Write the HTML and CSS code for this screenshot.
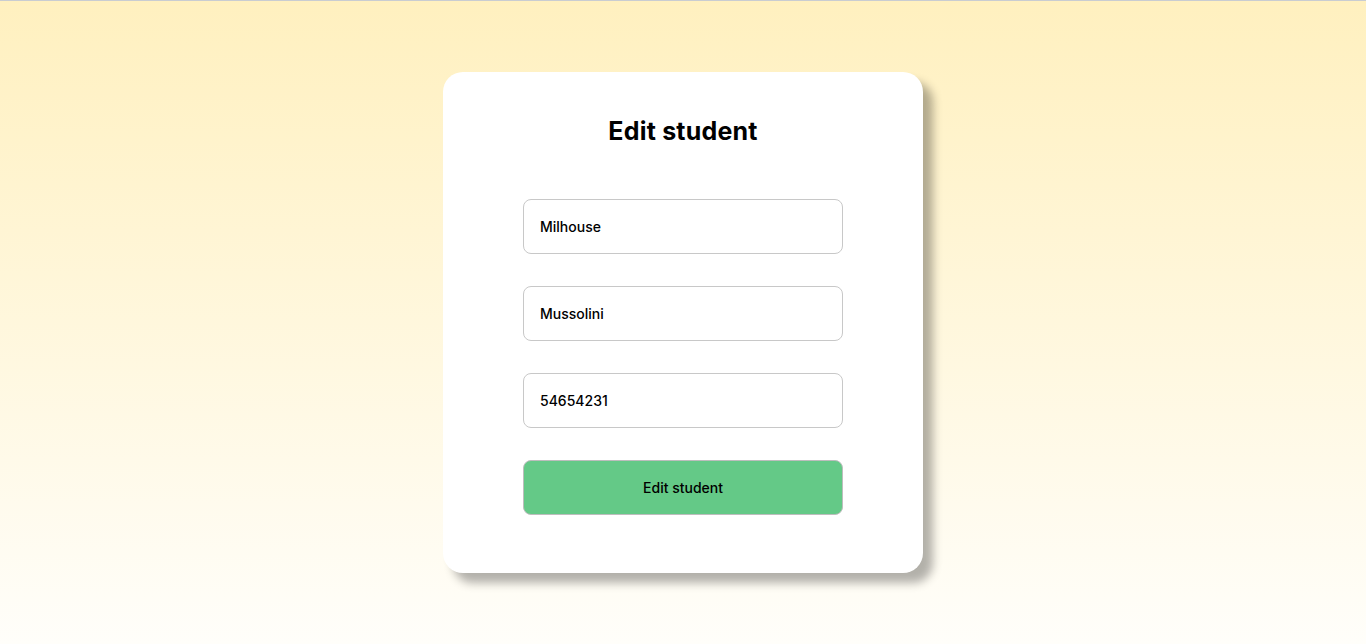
FILE: index.html
```html
<!DOCTYPE html>
<html lang="en">
<head>
<meta charset="utf-8">
<title>Edit student</title>
<link rel="stylesheet" href="styles.css">
</head>
<body>
<main class="page">
  <form class="card">
    <h1 class="title">Edit student</h1>
    <div class="fields">
      <input class="field" type="text" value="Milhouse">
      <input class="field" type="text" value="Mussolini">
      <input class="field" type="text" value="54654231">
      <button class="submit" type="button">Edit student</button>
    </div>
  </form>
</main>
</body>
</html>
```
FILE: styles.css
```css
* { box-sizing: border-box; }
html, body { margin: 0; padding: 0; }
body {
  font-family: "Inter", "Open Sans", sans-serif;
  border-top: 1px solid #c9ccd1;
  min-height: 644px;
  background: linear-gradient(180deg, #fff0bf 0%, #fffefa 100%);
}
.page {
  min-height: 643px;
  display: flex;
  align-items: center;
  justify-content: center;
}
.card {
  width: 480px;
  height: 501px;
  background: #ffffff;
  border-radius: 20px;
  box-shadow: 10px 10px 10px rgba(0, 0, 0, 0.3);
  padding: 41px 80px 0;
  display: flex;
  flex-direction: column;
  align-items: center;
}
.title {
  margin: 0;
  font-size: 25px;
  line-height: 36px;
  font-weight: 700;
  color: #000;
  letter-spacing: 0.2px;
}
.fields {
  margin-top: 50px;
  width: 320px;
  display: flex;
  flex-direction: column;
  gap: 32px;
}
.field {
  width: 320px;
  height: 55px;
  border: 1px solid #c8c8c8;
  border-radius: 8px;
  padding: 0 16px;
  font-family: inherit;
  font-size: 14px;
  font-weight: 500;
  color: #000;
  background: #fff;
  outline: none;
}
.submit {
  width: 320px;
  height: 55px;
  border: 1px solid #bdbdbd;
  border-radius: 8px;
  background: #64c987;
  font-family: inherit;
  font-size: 14px;
  font-weight: 500;
  color: #000;
  cursor: pointer;
}
```
